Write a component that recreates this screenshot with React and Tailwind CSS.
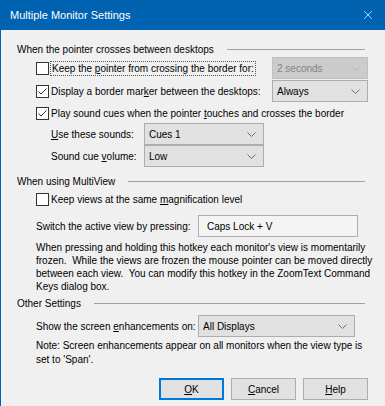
import { X } from "lucide-react";

const Check = ({ checked }) => (
  <span className="w-[13px] h-[13px] border border-[#333333] bg-white flex items-center justify-center shrink-0">
    {checked && (
      <svg width="11" height="11" viewBox="0 0 11 11">
        <path d="M1.5 5.5 L4 8 L9.5 2.5" fill="none" stroke="#333333" strokeWidth="1" />
      </svg>
    )}
  </span>
);

const Chevron = ({ disabled }) => (
  <svg width="9" height="5" viewBox="0 0 9 5">
    <path d="M0.5 0.5 L4.5 4.5 L8.5 0.5" fill="none" stroke={disabled ? "#b5b5b5" : "#6d6d6d"} strokeWidth="1" />
  </svg>
);

const Select = ({ value, disabled, className }) => (
  <div
    className={`h-[22px] flex items-center justify-between pl-[4px] pr-[7px] border shrink-0 ${
      disabled ? "bg-[#cccccc] border-[#bfbfbf] text-[#838383]" : "bg-[#e1e1e1] border-[#adadad] text-black"
    } ${className}`}
  >
    <span>{value}</span>
    <Chevron disabled={disabled} />
  </div>
);

const Section = ({ title, className }) => (
  <div className={`flex items-center h-[14px] mr-[3px] ${className}`}>
    <span>{title}</span>
    <div className="flex-1 h-px bg-[#a0a0a0] ml-[13px]" />
  </div>
);

const Button = ({ children, primary }) => (
  <button
    className={`w-[65px] h-[22px] bg-[#e1e1e1] flex items-center justify-center ${
      primary ? "border-2 border-[#0078d7]" : "border border-[#adadad]"
    }`}
  >
    {children}
  </button>
);

export default function App() {
  return (
    <div
      className="w-[385px] h-[406px] bg-[#f0f0f0] border-l border-[#0063b1] flex flex-col text-[10px] text-black overflow-hidden whitespace-nowrap"
      style={{ fontFamily: '"Liberation Sans", Arial, sans-serif' }}
    >
      {/* Title bar */}
      <div className="h-[30px] bg-[#0063b1] flex items-center justify-between pl-[9px] pr-[10px] text-white text-[11px] shrink-0">
        <span>Multiple Monitor Settings</span>
        <X size={14} strokeWidth={1.2} />
      </div>

      <div className="flex flex-col pl-[16px] pr-[17px]">
        {/* When the pointer crosses */}
        <Section title="When the pointer crosses between desktops" className="mt-[12px]" />

        <div className="flex items-center h-[22px] mt-[1px] pl-[19px]">
          <Check />
          <span className="ml-[1px] px-[1px] border border-dotted border-[#555555] leading-[13px]">
            Keep the <u>p</u>ointer from crossing the border for:
          </span>
          <div className="flex-1" />
          <Select value="2 seconds" disabled className="w-[96px]" />
        </div>

        <div className="flex items-center h-[22px] mt-[1px] pl-[19px]">
          <Check checked />
          <span className="ml-[2px]">
            Display a border mar<u>k</u>er between the desktops:
          </span>
          <div className="flex-1" />
          <Select value="Always" className="w-[96px]" />
        </div>

        <div className="flex items-center h-[20px] mt-[1px] pl-[19px]">
          <Check checked />
          <span className="ml-[2px]">
            Play sound cues when the pointer <u>t</u>ouches and crosses the border
          </span>
        </div>

        <div className="flex items-center h-[22px] pl-[34px]">
          <span className="w-[93px]">
            <u>U</u>se these sounds:
          </span>
          <Select value="Cues 1" className="w-[120px]" />
        </div>
        <div className="flex items-center h-[22px] pl-[34px]">
          <span className="w-[93px]">
            Sound cue <u>v</u>olume:
          </span>
          <Select value="Low" className="w-[120px]" />
        </div>

        {/* MultiView */}
        <Section title="When using MultiView" className="mt-[7px]" />

        <div className="flex items-center h-[14px] mt-[4px] pl-[19px]">
          <Check />
          <span className="ml-[2px]">
            Keep views at the same <u>m</u>agnification level
          </span>
        </div>

        <div className="flex items-center h-[22px] mt-[9px] pl-[19px]">
          <span className="w-[162px]">Switch the active view by pressing:</span>
          <div className="w-[160px] h-[22px] border border-[#adadad] bg-[#f4f4f4] flex items-center pl-[8px]">
            Caps Lock + V
          </div>
        </div>

        <p className="mt-[4px] pl-[19px] leading-[13px]">
          When pressing and holding this hotkey each monitor's view is momentarily
          <br />
          frozen.&nbsp; While the views are frozen the mouse pointer can be moved directly
          <br />
          between each view.&nbsp; You can modify this hotkey in the ZoomText Command
          <br />
          Keys dialog box.
        </p>

        {/* Other Settings */}
        <Section title="Other Settings" className="mt-[3px]" />

        <div className="flex items-center h-[22px] mt-[5px] pl-[19px]">
          <span className="w-[162px]">
            Show the screen <u>e</u>nhancements on:
          </span>
          <Select value="All Displays" className="w-[157px]" />
        </div>

        <p className="mt-[2px] pl-[19px] leading-[14px]">
          Note: Screen enhancements appear on all monitors when the view type is
          <br />
          set to 'Span'.
        </p>

        <div className="flex justify-end gap-[7px] mt-[11px]">
          <Button primary>
            <u>O</u>K
          </Button>
          <Button>
            <u>C</u>ancel
          </Button>
          <Button>
            <u>H</u>elp
          </Button>
        </div>
      </div>
    </div>
  );
}
